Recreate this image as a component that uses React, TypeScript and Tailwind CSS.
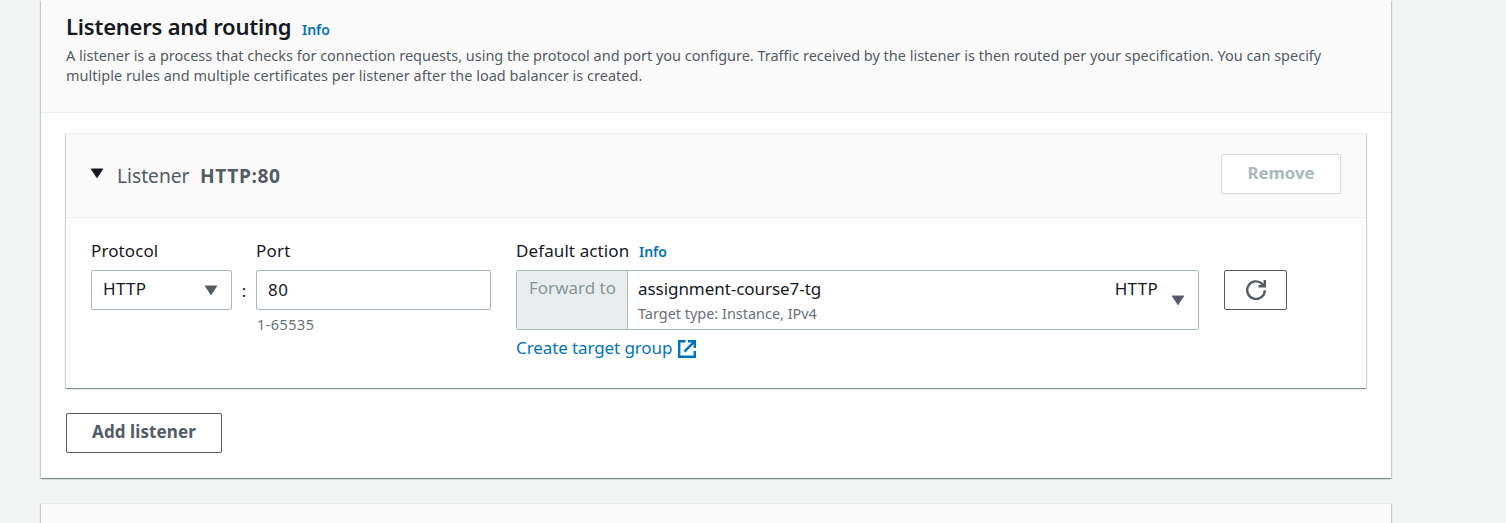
import React from "react";

const CARD_SHADOW =
  "border-t border-[#eaeded] shadow-[0_1px_1px_0_rgba(0,28,36,0.3),1px_1px_1px_0_rgba(0,28,36,0.15),-1px_1px_1px_0_rgba(0,28,36,0.15)]";

function Caret({ className }: { className: string }) {
  return (
    <svg viewBox="0 0 14 11" className={`h-[11px] w-[14px] shrink-0 ${className}`} fill="currentColor">
      <path d="M1.2 .9h11.6L7 9.8z" stroke="currentColor" strokeWidth="0.8" strokeLinejoin="round" />
    </svg>
  );
}

function ExternalIcon() {
  return (
    <svg viewBox="0 0 18 18" className="mt-0.5 h-[18px] w-[18px]" fill="none" stroke="currentColor" strokeWidth="2.4">
      <path d="M7.6 1.2H1.2v15.6h15.6v-5.8" />
      <path d="M10 1.2h6.8V8M16.6 1.4L6.4 11.6" />
    </svg>
  );
}

function RefreshIcon() {
  return (
    <svg viewBox="0 0 20 20" className="h-5 w-5" fill="none" stroke="currentColor" strokeWidth="2.4">
      <path d="M18.8 10.2A8.8 8.8 0 1 1 16.2 3.9L18 5.7" />
      <path d="M18.8 0v6.3H12.4" />
    </svg>
  );
}

function Info({ className }: { className: string }) {
  return <a className={`text-[14px] leading-5 font-semibold text-[#0073bb] ${className}`}>Info</a>;
}

export default function App() {
  return (
    <div className="h-[523px] overflow-hidden bg-[#f2f3f3] pl-[41px] font-['Noto_Sans',sans-serif] text-[17px] leading-5 whitespace-nowrap text-[#16191f]">
      <section className="h-[478px] w-[1350px] bg-white shadow-[0_1px_1px_0_rgba(0,28,36,0.3),1px_1px_1px_0_rgba(0,28,36,0.15),-1px_1px_1px_0_rgba(0,28,36,0.15)]">
        <header className="h-[113px] border-b border-[#eaeded] bg-[#fafafa] px-[25px] pt-[11px]">
          <div className="flex h-[35px] items-start">
            <h2 className="w-[236px] text-[22px] leading-[30px] font-semibold tracking-[-0.22px]">Listeners and routing</h2>
            <Info className="pt-[9px]" />
          </div>
          <p className="text-[14.47px] leading-5 text-[#545b64]">
            A listener is a process that checks for connection requests, using the protocol and port you configure. Traffic received by the listener is then routed per your specification. You can specify
            <br />
            <span className="tracking-[0.03px]">multiple rules and multiple certificates per listener after the load balancer is created.</span>
          </p>
        </header>

        <div className="px-[25px] pt-5">
          <div className={`h-[255px] bg-white ${CARD_SHADOW}`}>
            <div className="flex h-[84px] items-start border-b border-[#eaeded] bg-[#fafafa] pr-[25px] pl-6">
              <Caret className="mt-[34px] text-[#16191f]" />
              <div className="mt-[30px] ml-[13px] flex text-[19.2px] leading-6 text-[#545b64]">
                <span className="w-[83px]">Listener</span>
                <span className="font-bold tracking-[0.6px]">HTTP:80</span>
              </div>
              <button className="mt-5 ml-auto h-10 w-[120px] rounded-[2px] border border-[#d5dbdb] bg-white pb-0.5 text-[16.8px] font-bold text-[#aab7b8]">
                Remove
              </button>
            </div>

            <div className="flex items-start pt-[23px] pl-[25px]">
              <div className="w-[141px]">
                <label className="block h-[29px] tracking-[0.1px]">Protocol</label>
                <div className="flex h-10 items-center justify-between rounded-[2px] border border-[#aab7b8] pr-[13px] pl-[11px]">
                  <span className="-mt-0.5 tracking-[0.3px]">HTTP</span>
                  <Caret className="text-[#545b64]" />
                </div>
              </div>
              <span className="w-6 pt-10 text-center">:</span>
              <div className="w-[235px]">
                <label className="block h-[29px] tracking-[0.2px]">Port</label>
                <div className="flex h-10 items-center rounded-[2px] border border-[#aab7b8] px-[11px] tracking-[0.5px]">80</div>
                <p className="pt-[5px] pl-px text-[14.4px] tracking-[0.5px] text-[#687078]">1-65535</p>
              </div>
              <div className="ml-[25px] w-[683px]">
                <div className="flex h-[29px]">
                  <label className="w-[123px] tracking-[0.1px]">Default action</label>
                  <Info className="pt-px" />
                </div>
                <div className="flex h-[60px] rounded-[2px] border border-[#aab7b8]">
                  <span className="w-[111px] border-r border-[#aab7b8] bg-[#eaeded] pt-[7px] pl-3 text-[#879596]">Forward to</span>
                  <div className="flex-1 pt-2 pl-[10px]">
                    <p className="tracking-[-0.05px]">assignment-course7-tg</p>
                    <p className="pt-[5px] text-[14.45px] text-[#687078]">Target type: Instance, IPv4</p>
                  </div>
                  <span className="pt-2 pr-[13px] tracking-[0.3px]">HTTP</span>
                  <Caret className="mt-6 mr-[13px] text-[#545b64]" />
                </div>
                <a className="flex items-start pt-2 text-[#0073bb]">
                  <span className="w-[162px] tracking-[-0.1px]">Create target group</span>
                  <ExternalIcon />
                </a>
              </div>
              <button className="mt-[29px] ml-[25px] flex h-10 w-[63px] items-center justify-center rounded-[2px] border border-[#545b64] text-[#545b64]">
                <RefreshIcon />
              </button>
            </div>
          </div>
          <button className="mt-[25px] h-10 w-[156px] rounded-[2px] border border-[#545b64] pb-0.5 font-bold tracking-[0.1px] text-[#545b64]">Add listener</button>
        </div>
      </section>
      <section className={`mt-[25px] h-10 w-[1350px] bg-[#fafafa] ${CARD_SHADOW}`} />
    </div>
  );
}
